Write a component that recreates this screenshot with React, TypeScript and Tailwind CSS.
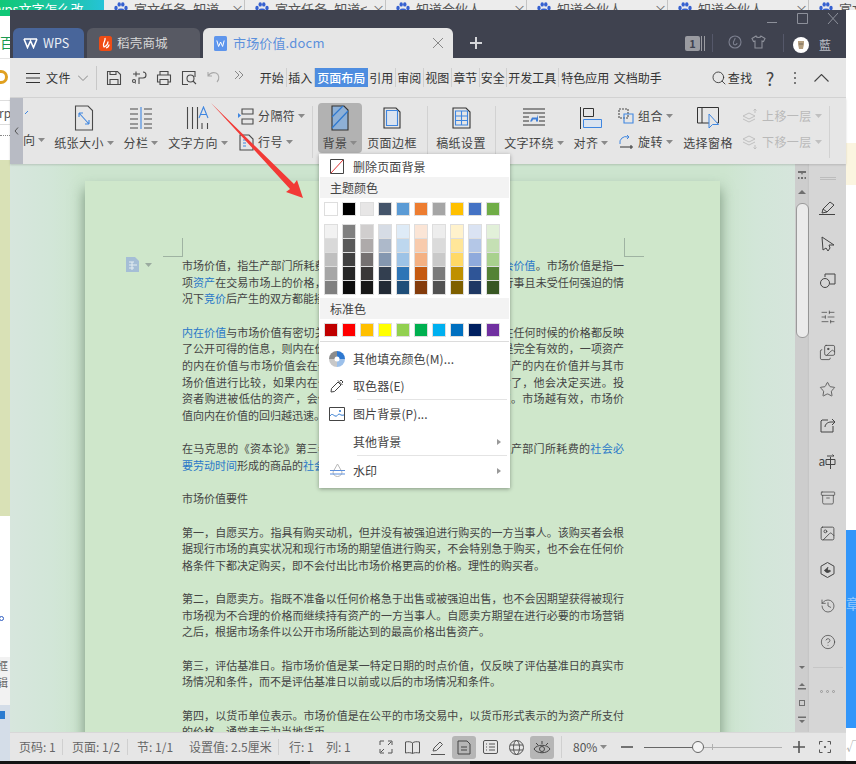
import React from "react";
import { Archive, CircleHelp, History, Search, Star, Images, Image as ImageIcon, SlidersHorizontal } from "lucide-react";

const INK = "#4a4a4a";
const BLUE = "#3f86e0";

const Caret = ({ c = "#8a8a8a" }: { c?: string }) => (
  <svg width="7" height="4" viewBox="0 0 7 4" className="ml-[3px] shrink-0"><path d="M0 0h7L3.5 4z" fill={c} /></svg>
);

const Paw = () => (
  <svg width="16" height="16" viewBox="0 0 16 16" className="shrink-0">
    <g fill="#3560d0">
      <ellipse cx="3" cy="7" rx="1.7" ry="2.2" />
      <ellipse cx="6.2" cy="3.4" rx="1.7" ry="2.2" />
      <ellipse cx="9.8" cy="3.4" rx="1.7" ry="2.2" />
      <ellipse cx="13" cy="7" rx="1.7" ry="2.2" />
      <ellipse cx="8" cy="11" rx="4" ry="3.4" />
    </g>
  </svg>
);

const BrowserTab = ({ label }: { label: string }) => (
  <div className="flex h-[10px] w-[141px] shrink-0 items-start gap-[5px] border-r border-[#c4c4c4] pl-[9px] pt-[1px] text-[13px] leading-[16px] text-[#555]">
    <Paw />
    <span className="w-[92px] overflow-hidden whitespace-nowrap">{label}</span>
    <span className="text-[#666]">×</span>
  </div>
);

const Sq = ({ children, w = 18, h = 18, vb }: { children: React.ReactNode; w?: number; h?: number; vb?: string }) => (
  <svg width={w} height={h} viewBox={vb || `0 0 ${w} ${h}`} fill="none" stroke={INK} strokeWidth="1.1" className="shrink-0">{children}</svg>
);

const tabs = [
  ["开始", 29], ["插入", 28], ["页面布局", 53], ["引用", 28], ["审阅", 28], ["视图", 28], ["章节", 28], ["安全", 27],
  ["开发工具", 52], ["特色应用", 53], ["文档助手", 52],
] as const;

const RibbonBig = ({ w, ml = 0, label, icon, caret, active }: { w: number; ml?: number; label: string; icon: React.ReactNode; caret?: boolean; active?: boolean }) => (
  <div style={{ width: w, marginLeft: ml }} className={`flex h-[50px] shrink-0 flex-col items-center rounded-[4px] ${active ? "bg-[#b2b2b2]" : ""}`}>
    <div className="flex h-[29px] items-center justify-center">{icon}</div>
    <div className="mt-[3px] flex items-center whitespace-nowrap text-[12px] leading-[16px] tracking-[0.4px] text-[#444]">{label}{caret && <Caret />}</div>
  </div>
);

const RibbonSmall = ({ icon, label, gray, caret = true }: { icon: React.ReactNode; label: string; gray?: boolean; caret?: boolean }) => (
  <div className={`flex h-[26px] items-center whitespace-nowrap text-[12px] tracking-[0.4px] ${gray ? "text-[#b9b9b9]" : "text-[#444]"}`}>
    <span className="mr-[4px] flex w-[16px] justify-center">{icon}</span>{label}{caret && <Caret c={gray ? "#c0c0c0" : "#8a8a8a"} />}
  </div>
);

const Sep = ({ ml }: { ml: number }) => <div style={{ marginLeft: ml }} className="mt-[3px] h-[52px] w-px shrink-0 bg-[#d2d2d2]" />;

const theme = ["#ffffff", "#000000", "#e7e6e6", "#44546a", "#5b9bd5", "#ed7d31", "#a5a5a5", "#ffc000", "#4472c4", "#70ad47"];
const shades = [
  ["#f2f2f2", "#d9d9d9", "#bfbfbf", "#a6a6a6", "#808080"],
  ["#808080", "#595959", "#404040", "#262626", "#0d0d0d"],
  ["#d0cece", "#aeaaaa", "#757171", "#3a3838", "#171717"],
  ["#d6dce5", "#adb9ca", "#8497b0", "#333f50", "#222a35"],
  ["#deebf7", "#bdd7ee", "#9dc3e6", "#2e75b6", "#1f4e79"],
  ["#fbe5d6", "#f8cbad", "#f4b183", "#c55a11", "#843c0c"],
  ["#ededed", "#dbdbdb", "#c9c9c9", "#7b7b7b", "#525252"],
  ["#fff2cc", "#ffe699", "#ffd966", "#bf9000", "#7f6000"],
  ["#dae3f3", "#b4c7e7", "#8faadc", "#2f5597", "#1f3864"],
  ["#e2f0d9", "#c5e0b4", "#a9d18e", "#548235", "#385723"],
];
const standard = ["#c00000", "#ff0000", "#ffc000", "#ffff00", "#92d050", "#00b050", "#00b0f0", "#0070c0", "#002060", "#7030a0"];

const Swatches = ({ colors }: { colors: string[] }) => (
  <div className="grid grid-cols-[repeat(10,14px)] gap-x-[4px] pl-[5px]">
    {colors.map((c, i) => <div key={i} style={{ background: c }} className="h-[14px] w-[14px] border border-[#dedede]" />)}
  </div>
);

const MenuRow = ({ icon, label, arrow, h = 27 }: { icon?: React.ReactNode; label: string; arrow?: boolean; h?: number }) => (
  <div style={{ height: h }} className="flex items-center text-[12px] tracking-[0.1px] text-[#444]">
    <span className="flex w-[34px] justify-center pl-[2px]">{icon}</span>
    <span className="flex-1">{label}</span>
    {arrow && <svg width="4" height="6" viewBox="0 0 4 6" className="mr-[9px]"><path d="M0 0l4 3-4 3z" fill="#999" /></svg>}
  </div>
);

const doc: string[] = [
  "市场价值，指生产部门所耗费的[[社会必要劳动时间]]形成的商品的[[社会价值]]。市场价值是指一",
  "项[[资产]]在交易市场上的价格，它是自愿买方和自愿卖方在各自理性行事且未受任何强迫的情",
  "况下[[竞价]]后产生的双方都能接受的价格。",
  "",
  "[[内在价值]]与市场价值有密切关系。如果市场是有效的，即所有资产在任何时候的价格都反映",
  "了公开可得的信息，则内在价值与市场价值应当相等。如果市场不是完全有效的，一项资产",
  "的内在价值与市场价值会在一定程度上不等。投资者估计了一种资产的内在价值并与其市",
  "场价值进行比较，如果内在价值高于市场价值，则认为资产被低估了，他会决定买进。投",
  "资者购进被低估的资产，会使资产价格上涨，直至回归到内在价值。市场越有效，市场价",
  "值向内在价值的回归越迅速。",
  "",
  "在马克思的《资本论》第三卷中，市场价值是指商品的价值，是生产部门所耗费的[[社会必]]",
  "[[要劳动时间]]形成的商品的[[社会]]价值。",
  "",
  "市场价值要件",
  "",
  "第一，自愿买方。指具有购买动机，但并没有被强迫进行购买的一方当事人。该购买者会根",
  "据现行市场的真实状况和现行市场的期望值进行购买，不会特别急于购买，也不会在任何价",
  "格条件下都决定购买，即不会付出比市场价格更高的价格。理性的购买者。",
  "",
  "第二，自愿卖方。指既不准备以任何价格急于出售或被强迫出售，也不会因期望获得被现行",
  "市场视为不合理的价格而继续持有资产的一方当事人。自愿卖方期望在进行必要的市场营销",
  "之后，根据市场条件以公开市场所能达到的最高价格出售资产。",
  "",
  "第三，评估基准日。指市场价值是某一特定日期的时点价值，仅反映了评估基准日的真实市",
  "场情况和条件，而不是评估基准日以前或以后的市场情况和条件。",
  "",
  "第四，以货币单位表示。市场价值是在公平的市场交易中，以货币形式表示的为资产所支付",
  "的价格，通常表示为当地货币。",
];
const lastLines = new Set([2, 9, 12, 14, 18, 22, 25, 28]);

const DocLine = ({ text, justify }: { text: string; justify: boolean }) => {
  const parts = text.split(/(\[\[.*?\]\])/).filter(Boolean);
  return (
    <div className={`h-[16.67px] whitespace-nowrap text-[11px] leading-[16.67px] text-[#444] ${justify ? "[text-align:justify] [text-align-last:justify]" : ""}`}>
      {parts.map((p, i) => p.startsWith("[[") ? <span key={i} className="text-[#2a78c8]">{p.slice(2, -2)}</span> : <span key={i}>{p}</span>)}
    </div>
  );
};

const SideIcon = ({ children }: { children: React.ReactNode }) => (
  <div className="flex h-[36.2px] items-center justify-center text-[#444]">{children}</div>
);

const ScrollMark = ({ d }: { d: string }) => (
  <svg width="8" height="8" viewBox="0 0 8 8"><path d={d} fill="#6f6f6f" /></svg>
);

const StatusIcon = ({ children, active }: { children: React.ReactNode; active?: boolean }) => (
  <div className={`flex h-[23px] w-[24px] shrink-0 items-center justify-center rounded-[3px] ${active ? "bg-[#b6b6b6]" : ""}`}>{children}</div>
);

export default function App() {
  return (
    <div className="relative flex h-[764px] w-[856px] flex-col overflow-hidden bg-white font-['Noto_Sans_CJK_SC','Liberation_Sans',sans-serif]">
      {/* browser tabs behind the window */}
      <div className="flex h-[10px] shrink-0 overflow-hidden bg-[#ececec]">
        <div className="h-[10px] w-[104px] shrink-0 overflow-hidden whitespace-nowrap bg-[linear-gradient(90deg,#10c878,#20c4b0_70%,#25c3d8)] text-[13px] leading-[18px] text-white">
          <span className="-ml-[6px] inline-block">wps文字怎么改</span>
        </div>
        {["富文任务_知道", "富文任务_知道<", "知道合伙人", "知道合伙人", "知道合伙人", "富文"].map((t, i) => <BrowserTab key={i} label={t} />)}
      </div>

      <div className="flex min-h-0 flex-1">
        {/* page behind, left sliver */}
        <div className="flex w-[10px] shrink-0 flex-col overflow-hidden bg-white text-[12px] text-[#666]">
          <div className="h-[6px] shrink-0 bg-[#10c878]" />
          <div className="h-[42px] shrink-0 whitespace-nowrap pt-[18px] text-[14px] leading-[16px] text-[#1a9a50]">百度</div>
          <div className="h-[42px] shrink-0 border-t border-[#e4e4e4] pt-[11px]"><div className="-ml-[6px] h-[14px] w-[14px] rounded-full border-[3px] border-[#e0a020]" /></div>
          <div className="h-[25px] shrink-0 whitespace-nowrap border-y border-[#ddd] text-[12px] leading-[23px] text-[#555]"><span className="-ml-[1px]">rps</span></div>
          <div className="h-[35px] shrink-0 pt-[10px]"><div className="h-px w-full border-t border-dotted border-[#888]" /></div>
          <div className="h-[356px] shrink-0 bg-[#d9e1b6]" />
          <div className="h-[141px] shrink-0 pt-[100px]"><div className="-ml-[1px] h-[5px] w-[5px] rounded-full border border-[#2c5bc0]" /></div>
          <div className="h-[48px] shrink-0 bg-[#f2f2f2] text-[11px] leading-[17px]"><span className="-ml-[3px] inline-block">框<br />辑</span></div>
          <div className="flex-1 bg-[#d4dde8] pt-[6px]"><div className="h-[8px] w-[5px] bg-[#2c7bd0]" /></div>
        </div>

        {/* WPS window */}
        <div className="flex w-[836px] shrink-0 flex-col">
          {/* title bar */}
          <div className="h-[48px] shrink-0 bg-[#3f424f]">
            <div className="flex h-[18px] items-center justify-end">
              <svg width="72" height="14" viewBox="0 0 72 14" fill="none" stroke="#8d909a" strokeWidth="1" className="mr-[8px]">
                <path d="M1 10.5h10M31.5 1.5h10v10h-10zM62 1l10 11M72 1L62 12" />
              </svg>
            </div>
            <div className="flex h-[30px] items-end pl-[3px]">
              <div className="flex h-[30px] w-[71px] items-center gap-[5px] rounded-t-[6px] bg-[#48659a] pl-[10px] text-[12.5px] text-white/90">
                <svg width="15" height="12" viewBox="0 0 15 12" fill="none" stroke="#fff" strokeWidth="1.6"><path d="M1 2l3.5 8.5L7.5 4l3 6.5L14 2M1 2h13" /></svg>
                WPS
              </div>
              <div className="ml-[3px] flex h-[30px] w-[113px] items-center gap-[5px] rounded-t-[6px] bg-[#575963] pl-[12px] text-[12.5px] tracking-[0.2px] text-[#d8d8d8]">
                <svg width="13" height="15" viewBox="0 0 13 15"><rect width="13" height="15" rx="2.5" fill="#ef4c14" /><path d="M6 2c.6 3-1.5 4-1.5 7 0 1 .6 2 .6 2S9 9 9 5.5M7 12c1.5-.5 3-2 3-3.5" stroke="#fff" strokeWidth="1.3" fill="none" /></svg>
                稻壳商城
              </div>
              <div className="ml-[3px] flex h-[30px] w-[250px] items-center rounded-t-[6px] bg-[#e6e6e6] pl-[11px] text-[13px] tracking-[0.15px] text-[#5c90dc]">
                <svg width="13" height="15" viewBox="0 0 13 15" className="mr-[6px]"><rect width="13" height="15" rx="1.5" fill="#5e95ec" /><path d="M2.8 4.5l1.8 6 2-4.500 2 4.500 1.600-6" stroke="#fff" strokeWidth="1" fill="none" /></svg>
                <span className="flex-1">市场价值.docm</span>
                <svg width="10" height="10" viewBox="0 0 10 10" stroke="#888" strokeWidth="1" className="mr-[10px]"><path d="M0 0l10 10M10 0L0 10" /></svg>
              </div>
              <svg width="12" height="12" viewBox="0 0 12 12" stroke="#d5d6da" strokeWidth="2" className="mb-[9px] ml-[17px]"><path d="M6 0v12M0 6h12" /></svg>
              <div className="mb-[7px] ml-[203px] flex h-[15px] w-[15px] items-center justify-center rounded-[2px] bg-[#9a9ba1] text-[11px] font-bold text-[#3f424f]">1</div>
              <div className="mb-[7px] ml-[1px] h-[15px] w-[4px] border-x border-[#9a9ba1]" />
              <div className="mb-[6px] ml-[7px] h-[18px] w-px bg-[#55586a]" />
              <svg width="14" height="14" viewBox="0 0 14 14" fill="none" stroke="#7d8090" strokeWidth="1.1" className="mb-[9px] ml-[15px]"><circle cx="7" cy="7" r="6" /><path d="M7 3c.5 2-2.500 3-1.500 6 1 1.500 3.500 1 3.500-1" /></svg>
              <svg width="15" height="14" viewBox="0 0 15 14" fill="none" stroke="#8d909a" strokeWidth="1.1" className="mb-[9px] ml-[9px]"><path d="M5 1L1 3.500l1.500 3L4 6v7h7V6l1.500.5L14 3.500 10 1C9.500 3 5.500 3 5 1z" /></svg>
              <div className="mb-[6px] ml-[17px] h-[18px] w-px bg-[#55586a]" />
              <div className="mb-[5px] ml-[9px] flex h-[16px] w-[16px] items-center justify-center rounded-full bg-white text-[8px] text-[#8a7355]">
                <svg width="10" height="10" viewBox="0 0 10 10"><path d="M2 1h6v3L7 9H3L2 4z" fill="#b49f80" /><path d="M3.500 4h1M5.500 4h1" stroke="#333" /></svg>
              </div>
              <span className="mb-[5px] ml-[10px] text-[12px] leading-[16px] text-[#b9bcc4]">藍</span>
            </div>
          </div>

          {/* menu row */}
          <div className="flex h-[40px] shrink-0 items-center border-b border-[#d4d4d4] bg-[#e6e6e6] text-[#333]">
            <svg width="14" height="10" viewBox="0 0 14 10" stroke="#333" strokeWidth="1" className="ml-[16px]"><path d="M0 .5h14M0 5h14M0 9.500h14" /></svg>
            <span className="ml-[6px] text-[12px] tracking-[0.4px]">文件</span>
            <svg width="10" height="6" viewBox="0 0 10 6" fill="none" stroke="#888" strokeWidth="1" className="ml-[7px]"><path d="M0 .5l5 5 5-5" /></svg>
            <div className="ml-[8px] h-[24px] w-px bg-[#c8c8c8]" />
            <div className="ml-[5px] flex">
              {[
                <Sq key="s" w={16} h={16}><path d="M1.500 1.500h10l3 3v10h-13zM4 14.500v-5h8v5M4 1.500v3h6v-3" /></Sq>,
                <Sq key="u" w={16} h={16}><path d="M2 4h7M5 1.500v5M12 2a3 3 0 0 1 0 6H8v6M4 13h1" /><circle cx="3" cy="11" r="1.500" /></Sq>,
                <Sq key="p" w={16} h={16}><path d="M4 5V1.500h8V5M4 12H1.500V5h13v7H12M4 9.500h8v5H4z" /></Sq>,
                <Sq key="q" w={16} h={16}><path d="M14 7V1.500H1.500v13H7" /><circle cx="9.500" cy="8.500" r="3.500" /><path d="M12 11l3 3" /></Sq>,
                <svg key="r" width="14" height="14" viewBox="0 0 14 14" fill="none" stroke="#a8a8a8" strokeWidth="1.1"><path d="M1 2v4h4M1 6c2-3 5-4 8-3s4 6 1 9" /></svg>,
                <svg key="m" width="10" height="10" viewBox="0 0 10 10" fill="none" stroke="#888" strokeWidth="1"><path d="M1 1l4 4-4 4M5 1l4 4-4 4" /></svg>,
              ].map((ic, i) => <div key={i} className="flex w-[25px] justify-center">{ic}</div>)}
            </div>
            <div className="ml-[6px] flex h-[19px]">
              {tabs.map(([t, w]) => (
                <div key={t} style={{ width: w }} className={`flex items-center justify-center whitespace-nowrap text-[12px] ${t === "页面布局" ? "bg-[#4e8de0] font-medium text-white" : "border-r border-[#cfcfcf] text-[#333]"} ${t === "特色应用" || t === "文档助手" ? "border-r-0" : ""}`}>{t}</div>
              ))}
            </div>
            <Search size={16} strokeWidth={1.3} color="#333" className="ml-[47px]" />
            <span className="ml-[1px] text-[12px] tracking-[0.4px]">查找</span>
            <span className="ml-[13px] text-[18px] leading-[20px] text-[#444]">?</span>
            <svg width="4" height="14" viewBox="0 0 4 14" fill="#555" className="ml-[19px]"><circle cx="2" cy="2" r="1" /><circle cx="2" cy="7" r="1" /><circle cx="2" cy="12" r="1" /></svg>
            <svg width="15" height="8" viewBox="0 0 15 8" fill="none" stroke="#444" strokeWidth="1.1" className="ml-[17px]"><path d="M.5 7.500l7-7 7 7" /></svg>
          </div>

          {/* ribbon */}
          <div className="relative z-10 flex h-[66px] shrink-0 items-start bg-[#e6e6e6] shadow-[0_1px_2px_rgba(0,0,0,0.15)]">
            <div className="flex h-[66px] w-[13px] shrink-0 items-center justify-center bg-[#b8bbc4] text-[#555]">
              <svg width="5" height="8" viewBox="0 0 5 8" fill="none" stroke="#555"><path d="M4 .5L1 4l3 3.500" /></svg>
            </div>
            <div className="flex pt-[5px]">
              <div className="flex h-[50px] w-[29px] shrink-0 flex-col">
                <svg width="4" height="4" viewBox="0 0 4 4" className="ml-[2px] mt-[7px]" stroke={BLUE}><path d="M0 4l3-3" /></svg>
                <div className="mt-[18px] flex items-center text-[12px] leading-[16px] text-[#444]">向<Caret /></div>
              </div>
              <RibbonBig w={64} label="纸张大小" caret icon={
                <Sq w={20} h={26}><path d="M1.500 1h12.500l4.500 4.500v19.500h-17z" /><path d="M5 8l10 11M5 8v4M5 8h4M15 19v-4M15 19h-4" stroke={BLUE} /></Sq>} />
              <RibbonBig w={40} ml={5} label="分栏" caret icon={
                <Sq w={24} h={22}><path d="M1 2h8M1 7h8M1 12h8M1 17h8M1 21h8M15 2h8M15 7h8M15 12h8M15 17h8M15 21h8" /><path d="M12 0v22" stroke={BLUE} /></Sq>} />
              <RibbonBig w={64} ml={5} label="文字方向" caret icon={
                <Sq w={24} h={24}><path d="M1.500 1v22M6.500 1v22M11.500 1v22M16 23V17M21.500 23V17" /><path d="M13 12l4.500-11 4.500 11M14.500 8.500h6" stroke={BLUE} /></Sq>} />
              <div className="ml-[8px] flex w-[70px] shrink-0 flex-col">
                <RibbonSmall label="分隔符" icon={<Sq w={16} h={18}><path d="M4 2h11v5H4zM4 12h11v5H4z" /><path d="M0 6l3 2.500L0 11z" fill={BLUE} stroke="none" /></Sq>} />
                <RibbonSmall label="行号" icon={<Sq w={15} h={17}><path d="M1 1h9l4 4v11H1z" /><path d="M4 6h3M4 9h3M4 12h3" stroke={BLUE} /></Sq>} />
              </div>
              <Sep ml={4} />
              <RibbonBig w={44} ml={5} active label="背景" caret icon={
                <svg width="18" height="26" viewBox="0 0 18 26" fill="none"><path d="M1 1h12l4 4v20H1z" fill="#8eb0d6" stroke="#333" strokeWidth="1.1" /><path d="M1 12L12 1M1 23L17 6" stroke="#2e78d0" strokeWidth="1.2" /></svg>} />
              <RibbonBig w={56} ml={2} label="页面边框" icon={
                <svg width="18" height="22" viewBox="0 0 18 22" fill="none"><path d="M1 1h12l4 4v16H1z" stroke="#333" strokeWidth="1.1" /><path d="M3.500 3.500h11v15h-11z" fill="#dbe4f0" stroke={BLUE} strokeWidth="1.1" /></svg>} />
              <Sep ml={7} />
              <RibbonBig w={56} ml={5} label="稿纸设置" icon={
                <svg width="19" height="22" viewBox="0 0 19 22" fill="none"><path d="M1 1h13l4 4v16H1z" stroke="#333" strokeWidth="1.1" /><path d="M3.500 4h12v14h-12zM3.500 9h12M3.500 13.500h12M9.500 4v14" stroke={BLUE} strokeWidth="1.1" /></svg>} />
              <Sep ml={6} />
              <RibbonBig w={64} ml={6} label="文字环绕" caret icon={
                <svg width="23" height="20" viewBox="0 0 23 20" fill="none"><path d="M0 1h22M0 5h22M0 9h6M16 9h6M0 13h6M16 13h6M0 17h22" stroke="#333" strokeWidth="1" /><path d="M7 13.500l2-4h5l1-3v7h-2v-2H10l-1 2z" fill="#3f7fd8" /></svg>} />
              <RibbonBig w={40} ml={5} label="对齐" caret icon={
                <svg width="22" height="22" viewBox="0 0 22 22" fill="none"><path d="M.5 0v22" stroke="#333" /><path d="M3.500 1.500h10v8h-10z" stroke="#333" /><path d="M3.500 12.500h18v8h-18z" fill="#dbe4f0" stroke={BLUE} /></svg>} />
              <div className="ml-[7px] flex w-[62px] shrink-0 flex-col">
                <RibbonSmall label="组合" icon={<Sq w={16} h={16}><path d="M1 1h9v9H1z" strokeDasharray="2 1" /><path d="M6 6h9v9H6z" stroke={BLUE} /></Sq>} />
                <RibbonSmall label="旋转" icon={<svg width="15" height="16" viewBox="0 0 15 16" fill="none" stroke="#333"><path d="M1 10a6 6 0 0 1 8-7" stroke={BLUE} /><path d="M8 1l2 2-2 2" stroke={BLUE} /><path d="M1 13h13M12 11v4" /></svg>} />
              </div>
              <RibbonBig w={56} label="选择窗格" icon={
                <svg width="23" height="23" viewBox="0 0 23 23" fill="none"><path d="M.5 1.500h21V17H.5zM5 1.500V17" stroke="#333" /><path d="M12 8v14l3.500-3.500h6z" fill="#e6e6e6" stroke={BLUE} /></svg>} />
              <div className="ml-[6px] flex w-[82px] shrink-0 flex-col">
                <RibbonSmall gray label="上移一层" icon={<svg width="16" height="16" viewBox="0 0 16 16" fill="none" stroke="#c0c0c0"><path d="M1 8l6-3 6 3-6 3zM1 11l6 3 6-3M13 5V1M11.500 2.500L13 1l1.500 1.500" /></svg>} />
                <RibbonSmall gray label="下移一层" icon={<svg width="16" height="16" viewBox="0 0 16 16" fill="none" stroke="#c0c0c0"><path d="M1 5l6-3 6 3-6 3zM1 8l6 3 6-3M13 11v4M11.500 13.500L13 15l1.500-1.500" /></svg>} />
              </div>
              <Sep ml={5} />
            </div>
          </div>

          {/* body */}
          <div className="flex min-h-0 flex-1">
            <div className="w-[785px] shrink-0 overflow-hidden bg-[linear-gradient(90deg,#d7e6dd_0%,#d2e6d8_5%,#cde5cf_9%,#cde5cf_91%,#d2e6d8_95%,#d6e5dc_100%)] pl-[75px] pt-[17px]">
              <div className="relative h-[700px] w-[635px] bg-[#cfe7cb] pl-[97px] pr-[96px] pt-[76px] shadow-[0_8px_13px_rgba(60,90,65,0.6)]">
                <div className="absolute left-[78px] top-[57px] h-[19px] w-[20px] border-b border-r border-[#9fb3a2]" />
                <div className="absolute left-[539px] top-[57px] h-[19px] w-[20px] border-b border-l border-[#9fb3a2]" />
                <div className="absolute left-[41px] top-[76px] flex items-center">
                  <svg width="13" height="15" viewBox="0 0 13 15"><path d="M0 0h9l4 4v11H0z" fill="#a5bed6" /><path d="M3 5h5M3 8h8M3 11h5M6 5v8" stroke="#e5eef2" /></svg>
                  <svg width="7" height="4" viewBox="0 0 7 4" className="ml-[6px]"><path d="M0 0h7L3.500 4z" fill="#9aab9f" /></svg>
                </div>
                {doc.map((l, i) => <DocLine key={i} text={l} justify={l !== "" && !lastLines.has(i)} />)}
              </div>
            </div>

            {/* scrollbar */}
            <div className="flex w-[14px] shrink-0 flex-col items-center bg-[#cdcdcd] pt-[7px]">
              <ScrollMark d="M0 0h8v2H5L4 4 3 2H0zM0 6h1.500v2H0zM3 6h2v2H3zM6.500 6H8v2H6.500z" />
              <div className="mt-[9px]"><ScrollMark d="M0 6l4-4 4 4z" /></div>
              <div className="mt-[7px] h-[135px] w-[13px] rounded-[6px] border border-[#9a9a9a] bg-[#ebebeb]" />
              <div className="mt-auto flex flex-col items-center gap-[10px] pb-[8px]">
                <ScrollMark d="M1 2h6L4 5z" />
                <ScrollMark d="M1 4l3-3 3 3zM0 6h8v1.500H0z" />
                <div className="h-[6px] w-[6px] border border-[#6f6f6f]" />
                <ScrollMark d="M0 .5h8V2H0zM1 4h6L4 7z" />
              </div>
            </div>

            {/* side bar */}
            <div className="flex w-[37px] shrink-0 flex-col items-center bg-[#d6d6d6] shadow-[1px_0_3px_rgba(0,0,0,0.2)]">
              <div className="mt-[13px] h-[3px] w-[16px] border-y border-[#bcbcbc]" />
              <div className="mt-[10px] w-full">
                <SideIcon><svg width="17" height="14" viewBox="0 0 17 14" fill="none" stroke="#444"><path d="M0 13.500h16M3 12l1-4 7-7 4 3-7 7z" /><path d="M4 8l4 3" /></svg></SideIcon>
                <SideIcon><svg width="14" height="16" viewBox="0 0 14 16" fill="none" stroke="#444"><path d="M1 1l12 8H8l1 3-2 3-2-3-3 2z" /></svg></SideIcon>
                <SideIcon><svg width="16" height="15" viewBox="0 0 16 15" fill="none" stroke="#444"><path d="M5 4V1h10v10h-5" /><circle cx="5" cy="10" r="4.500" /></svg></SideIcon>
                <SideIcon><SlidersHorizontal size={16} strokeWidth={1.1} /></SideIcon>
                <SideIcon><Images size={17} strokeWidth={1.1} /></SideIcon>
                <SideIcon><Star size={17} strokeWidth={1.1} /></SideIcon>
                <SideIcon><svg width="16" height="15" viewBox="0 0 16 15" fill="none" stroke="#444"><path d="M8 2H2l-1 1v11h12V8M5 9c0-3 3-5 6-5h4M12 1l3 3-3 3" /></svg></SideIcon>
                <SideIcon><span className="flex items-center text-[12px] leading-[14px]">a<svg width="11" height="15" viewBox="0 0 11 15" fill="none" stroke="#444"><path d="M1 5.500h9v5H1zM5.500 3v12M2 2h7l-1.500-1.500" /></svg></span></SideIcon>
                <SideIcon><Archive size={16} strokeWidth={1.1} /></SideIcon>
                <SideIcon><ImageIcon size={17} strokeWidth={1.2} /></SideIcon>
                <SideIcon><svg width="15" height="16" viewBox="0 0 15 16" fill="none" stroke="#444"><path d="M7.500.5l6.500 3.700v7.600l-6.500 3.700L1 11.800V4.200z" /><path d="M4.500 8c1 3 4 3 6 1-1-1-2-1-3 0 0-2 0-3 .5-4" fill="#444" /></svg></SideIcon>
                <SideIcon><History size={16} strokeWidth={1.1} /></SideIcon>
                <SideIcon><CircleHelp size={16} strokeWidth={1.1} /></SideIcon>
              </div>
              <div className="mt-[7px] h-px w-[30px] bg-[#c6c6c6]" />
              <div className="mt-[22px] flex gap-[3px]">
                {[0, 1, 2].map(i => <div key={i} className="h-[3px] w-[3px] rounded-full border border-[#999]" />)}
              </div>
            </div>
          </div>

          {/* status bar */}
          <div className="flex h-[29px] shrink-0 items-center border-t border-[#d8d8d8] bg-[#e6e6e6] text-[12px] text-[#666]">
            <span className="ml-[9px] w-[43px] whitespace-nowrap">页码: 1</span>
            <div className="h-[16px] w-px bg-[#d0d0d0]" />
            <span className="ml-[9px] w-[55px] whitespace-nowrap">页面: 1/2</span>
            <div className="h-[16px] w-px bg-[#d0d0d0]" />
            <span className="ml-[9px] w-[52px] whitespace-nowrap">节: 1/1</span>
            <span className="w-[89px] whitespace-nowrap">设置值: 2.5厘米</span>
            <div className="h-[16px] w-px bg-[#d0d0d0]" />
            <span className="ml-[10px] w-[37px] whitespace-nowrap">行: 1</span>
            <span className="w-[36px] whitespace-nowrap">列: 1</span>
            <div className="ml-[12px] flex items-center gap-[2px]">
              <StatusIcon><svg width="14" height="14" viewBox="0 0 14 14" fill="none" stroke="#555"><path d="M1 5V1h4M9 1h4v4M13 9v4H9M5 13H1V9M2 12l3-3M12 2L9 5" /></svg></StatusIcon>
              <StatusIcon><svg width="15" height="13" viewBox="0 0 15 13" fill="none" stroke="#555"><path d="M.5 1C3 .5 6 .5 7.500 2c1.500-1.500 4.500-1.500 7-1v11c-2.500-.5-5.500-.5-7 .5-1.500-1-4.500-1-7-.5zM7.500 2v10.500" /></svg></StatusIcon>
              <StatusIcon><svg width="15" height="15" viewBox="0 0 15 15" fill="none" stroke="#555"><path d="M0 14.500h14M2 11l1-3 6-6 2.500 2.500-6 6z" /></svg></StatusIcon>
              <StatusIcon active><svg width="14" height="15" viewBox="0 0 14 15" fill="none" stroke="#444"><path d="M1 1h9l3 3v10H1zM4 7h6M4 10h6" /></svg></StatusIcon>
              <StatusIcon><svg width="15" height="14" viewBox="0 0 15 14" fill="none" stroke="#555"><rect x=".5" y=".5" width="14" height="13" rx="1.5" /><path d="M3 4h1M3 7h1M3 10h1M6 4h6M6 7h6M6 10h6" /></svg></StatusIcon>
              <StatusIcon><svg width="15" height="15" viewBox="0 0 15 15" fill="none" stroke="#555"><circle cx="7.500" cy="7.500" r="7" /><ellipse cx="7.500" cy="7.500" rx="3" ry="7" /><path d="M1 5h13M1 10h13" /></svg></StatusIcon>
              <StatusIcon active><svg width="18" height="17" viewBox="0 0 18 17" fill="none" stroke="#444"><path d="M1 10c3-5 13-5 16 0-3 5-13 5-16 0z" /><circle cx="9" cy="10" r="2.500" /><path d="M3 4l2 2M9 2v3M15 4l-2 2" /></svg></StatusIcon>
            </div>
            <div className="ml-[7px] h-[22px] w-px bg-[#d0d0d0]" />
            <span className="ml-[11px] text-[12px] text-[#555]">80%</span>
            <Caret />
            <svg width="12" height="2" viewBox="0 0 12 2" className="ml-[14px]"><path d="M0 1h12" stroke="#555" strokeWidth="1.6" /></svg>
            <div className="relative ml-[11px] h-[12px] w-[138px]">
              <div className="absolute left-0 top-[5.5px] h-px w-[54px] bg-[#666]" />
              <div className="absolute left-[54px] top-[5.5px] h-px w-[84px] bg-[#b0b0b0]" />
              <div className="absolute left-[68px] top-[3px] h-[6px] w-px bg-[#b0b0b0]" />
              <div className="absolute left-[48px] top-0 h-[12px] w-[12px] rounded-full border border-[#666] bg-[#f4f4f4]" />
            </div>
            <svg width="12" height="12" viewBox="0 0 12 12" stroke="#555" strokeWidth="1.6" className="ml-[11px]"><path d="M6 0v12M0 6h12" /></svg>
            <svg width="12" height="12" viewBox="0 0 12 12" fill="none" stroke="#555" className="ml-[14px]"><path d="M.5 3.500v-3h3M8.500.5h3v3M11.500 8.500v3h-3M3.500 11.500h-3v-3" /><circle cx="6" cy="6" r=".7" fill="#555" /></svg>
          </div>
        </div>

        {/* page behind, right sliver */}
        <div className="flex w-[10px] shrink-0 flex-col overflow-hidden bg-white">
          <div className="h-[133px] shrink-0" />
          <div className="h-[42px] shrink-0 bg-[#fbf5e0]" />
          <div className="h-[345px] shrink-0" />
          <div className="flex h-[198px] shrink-0 items-start bg-[#3296fa] pt-[64px] text-[14px] leading-[18px] text-white/50"><span className="whitespace-nowrap">章</span></div>
          <div className="flex-1 pt-[12px] text-[12px] leading-[12px] text-[#aaa]">√</div>
        </div>
      </div>
      <div className="flex h-[3px] shrink-0 bg-[#141414]">
        <div className="ml-[310px] h-[3px] w-[160px] bg-[#444]" />
      </div>

      {/* colour menu dropped from 背景 */}
      <div className="absolute left-[319px] top-[154px] z-20 h-[334px] w-[191px] bg-white pt-[2px] shadow-[0_1px_4px_rgba(0,0,0,0.35)]">
        <MenuRow h={21} label="删除页面背景" icon={
          <svg width="14" height="15" viewBox="0 0 14 15" fill="none"><path d="M.5.5h13v14H.5z" stroke="#444" /><path d="M1 14L13 1" stroke="#d33" /></svg>} />
        <div className="mx-px flex h-[21px] items-center bg-[#f3f3f3] pl-[10px] text-[12px] text-[#444]">主题颜色</div>
        <div className="mt-[4px]"><Swatches colors={theme} /></div>
        <div className="mt-[8px] grid grid-cols-[repeat(10,14px)] gap-x-[4px] pl-[5px]">
          {shades.map((col, i) => (
            <div key={i} className="flex flex-col border-x border-t border-[#dedede]">
              {col.map((c, j) => <div key={j} style={{ background: c }} className="h-[14px] w-full border-b border-[#dedede]" />)}
            </div>
          ))}
        </div>
        <div className="mx-px mt-[3px] flex h-[21px] items-center bg-[#f3f3f3] pl-[10px] text-[12px] text-[#444]">标准色</div>
        <div className="mt-[4px]"><Swatches colors={standard} /></div>
        <div className="mx-px mt-[4px] h-px bg-[#dcdcdc]" />
        <div className="mt-[3px]">
          <MenuRow label="其他填充颜色(M)..." icon={
            <svg width="16" height="16" viewBox="0 0 16 16"><path d="M8 8V0a8 8 0 0 1 8 8z" fill="#2e78d0" /><path d="M8 8h8a8 8 0 0 1-8 8z" fill="#9cc0ea" /><path d="M8 8v8a8 8 0 0 1-8-8z" fill="#c8c8c8" /><path d="M8 8H0a8 8 0 0 1 8-8z" fill="#8c8c8c" /><circle cx="8" cy="8" r="2.5" fill="#fff" /></svg>} />
          <MenuRow label="取色器(E)" icon={
            <svg width="14" height="14" viewBox="0 0 14 14" fill="none" stroke="#444"><path d="M8 3l3 3-6.500 6.500L1 13l.5-3.500zM8 1.500l4.500 4.500M10 2l1-1 2 2-1 1" /></svg>} />
          <div className="ml-[38px] mr-[3px] h-px bg-[#e4e4e4]" />
          <MenuRow h={28} label="图片背景(P)..." icon={
            <svg width="16" height="14" viewBox="0 0 16 14" fill="none"><path d="M.5.5h15v13H.5z" stroke="#444" /><path d="M1 9c2-3 3-1 5 0s3-2 4-2 2 2 5 1" stroke="#2e78d0" /><circle cx="11" cy="4" r="1" fill="#2e78d0" /></svg>} />
          <MenuRow label="其他背景" arrow />
          <div className="ml-[38px] mr-[3px] h-px bg-[#e4e4e4]" />
          <MenuRow h={30} label="水印" arrow icon={
            <svg width="15" height="16" viewBox="0 0 15 16" fill="none"><path d="M7.500 1L3 9a4.500 4.500 0 1 0 9 0z" stroke="#b8b8b8" /><path d="M0 7.500h15M0 11h15" stroke="#5c8fdc" /></svg>} />
        </div>
      </div>

      {/* red annotation arrow */}
      <svg width="856" height="764" viewBox="0 0 856 764" className="pointer-events-none absolute left-0 top-0 z-10">
        <path d="M211 103L290 189L286 192L303 198L297 180L294 184Z" fill="#f23a36" />
      </svg>
    </div>
  );
}
